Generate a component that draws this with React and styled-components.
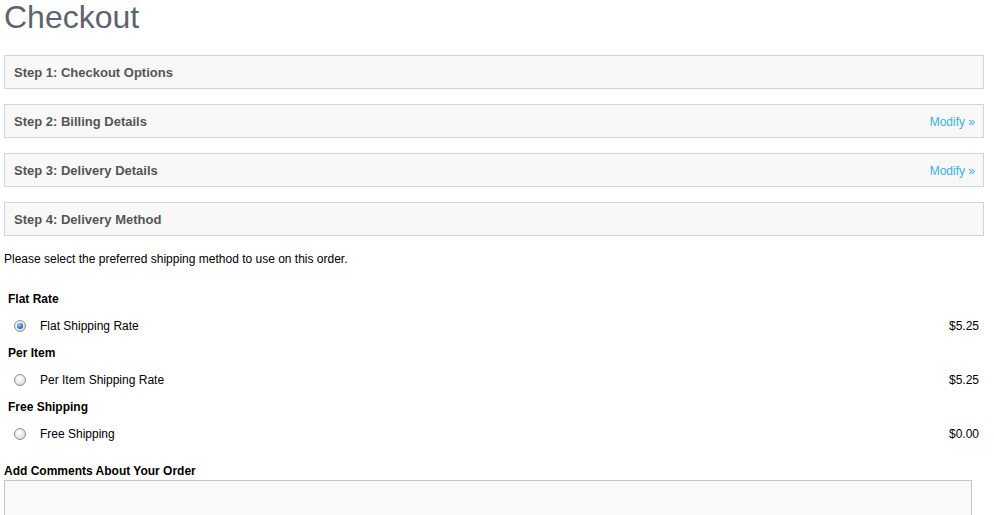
import styled, { createGlobalStyle } from "styled-components";

const GlobalStyle = createGlobalStyle`
  html, body {
    overflow: hidden;
  }
  body {
    margin: 0;
    background: #fff;
    font-family: Arial, "Liberation Sans", sans-serif;
    font-size: 12px;
    color: #000;
  }
`;

const Page = styled.div`
  padding: 0 10px 0 4px;
  width: 980px;
`;

const Title = styled.h1`
  margin: 0 0 21px 0;
  font-size: 32px;
  line-height: 34px;
  font-weight: normal;
  color: #5d6470;
`;

const Panel = styled.div`
  box-sizing: border-box;
  height: 34px;
  margin-bottom: 15px;
  border: 1px solid #cfd5da;
  background: #f8f8f8;
  display: flex;
  align-items: center;
  justify-content: space-between;
  padding: 0 8px 0 9px;
`;

const PanelTitle = styled.span`
  font-size: 13px;
  font-weight: bold;
  color: #555;
`;

const ModifyLink = styled.a`
  font-size: 12px;
  color: #38b0e3;
  text-decoration: none;
  cursor: pointer;
  margin-top: 1px;
`;

const Intro = styled.p`
  margin: 0;
  line-height: 16px;
`;

const MethodTable = styled.table`
  width: 980px;
  border-collapse: collapse;
  margin-top: 18px;
`;

const Row = styled.tr`
  height: 27px;
`;

const GroupCell = styled.td`
  padding: 0 4px;
  font-weight: bold;
`;

const RadioCell = styled.td`
  width: 24px;
  padding: 0 0 0 10px;
  vertical-align: middle;
`;

const NameCell = styled.td`
  padding: 0 0 0 2px;
`;

const PriceCell = styled.td`
  text-align: right;
  padding-right: 5px;
`;

const Radio = styled.span`
  display: block;
  box-sizing: border-box;
  width: 12px;
  height: 12px;
  border-radius: 50%;
  border: 1px solid #8f8f8f;
  background: radial-gradient(circle at 40% 35%, #fff 0%, #e8e8e8 55%, #c4c4c4 100%);
  position: relative;

  &::after {
    content: "";
    display: ${(p) => (p.$checked ? "block" : "none")};
    position: absolute;
    left: 2px;
    top: 2px;
    width: 6px;
    height: 6px;
    border-radius: 50%;
    background: radial-gradient(circle at 40% 35%, #9fd6ff 0%, #2b74c8 55%, #0f3f7a 100%);
  }
`;

const CommentLabel = styled.div`
  margin-top: 16px;
  font-weight: bold;
  line-height: 16px;
`;

const Comments = styled.textarea`
  display: block;
  box-sizing: border-box;
  width: 968px;
  height: 80px;
  margin-top: 1px;
  border: 1px solid #c8c8c8;
  background: #f9f9f9;
  resize: none;
`;

const steps = [
  { title: "Step 1: Checkout Options" },
  { title: "Step 2: Billing Details", modify: true },
  { title: "Step 3: Delivery Details", modify: true },
  { title: "Step 4: Delivery Method" },
];

const methods = [
  { group: "Flat Rate", name: "Flat Shipping Rate", price: "$5.25", checked: true },
  { group: "Per Item", name: "Per Item Shipping Rate", price: "$5.25" },
  { group: "Free Shipping", name: "Free Shipping", price: "$0.00" },
];

export default function App() {
  return (
    <Page>
      <GlobalStyle />
      <Title>Checkout</Title>
      {steps.map((s) => (
        <Panel key={s.title}>
          <PanelTitle>{s.title}</PanelTitle>
          {s.modify && <ModifyLink>Modify »</ModifyLink>}
        </Panel>
      ))}
      <Intro>Please select the preferred shipping method to use on this order.</Intro>
      <MethodTable>
        <tbody>
          {methods.map((m) => [
            <Row key={m.group + "-g"}>
              <GroupCell colSpan={3}>{m.group}</GroupCell>
            </Row>,
            <Row key={m.group + "-r"}>
              <RadioCell>
                <Radio $checked={m.checked} />
              </RadioCell>
              <NameCell>{m.name}</NameCell>
              <PriceCell>{m.price}</PriceCell>
            </Row>,
          ])}
        </tbody>
      </MethodTable>
      <CommentLabel>Add Comments About Your Order</CommentLabel>
      <Comments />
    </Page>
  );
}
